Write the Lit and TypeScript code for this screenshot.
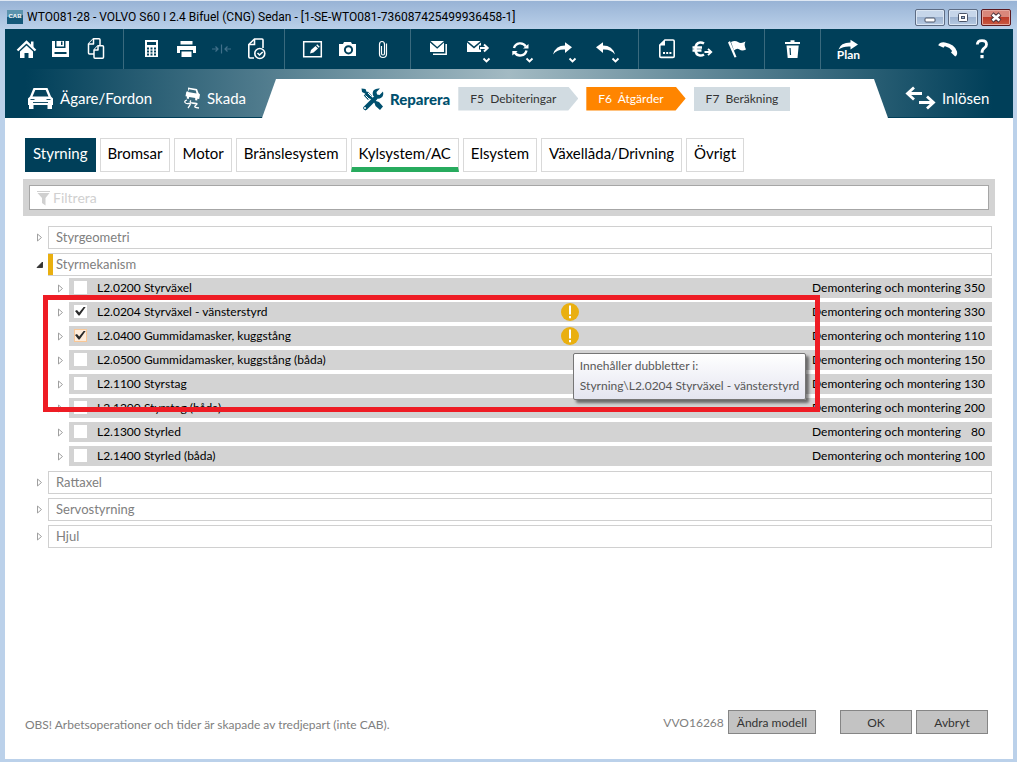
import { LitElement, html, svg, css, nothing } from "lit";
import { customElement, state } from "lit/decorators.js";
import { classMap } from "lit/directives/class-map.js";

const chevron = svg`<path d="M27.500 29.500l3 3 3-3" fill="none" stroke="currentColor" stroke-width="1.800"/>`;

const icons = {
  home: svg`<path d="M8.500 21.500l9-8.500 9 8.500" fill="none" stroke="currentColor" stroke-width="2.400"/><path d="M22 12.500h2.500v6H22z"/><path d="M11 22.500l6.500-6 6.500 6V29h-4.500v-5h-4v5H11z"/>`,
  save: svg`<path d="M8 12h3v7h10.500v-7H25v16H8z"/><path d="M12.500 12h7.500v5.500h-7.500z"/><path d="M17 12.500h1.500v3.500H17zM10.500 23h12v2h-12z" fill="#003f59"/>`,
  copy: svg`<g fill="#003f59" stroke="currentColor" stroke-width="1.500" stroke-linejoin="round"><path d="M14.500 9.800H20q1 0 1 1V24q0 1-1 1H10.500q-1 0-1-1v-9z"/><path d="M14.500 9.800V15h-5"/><path d="M19 16.800h4.500q1 0 1 1v10.500q0 1-1 1h-7.500q-1 0-1-1V21z"/><path d="M19 16.800V21h-4"/></g>`,
  calc: svg`<path d="M11 11h13v17H11z"/><path d="M13 13h9v3h-9z" fill="#003f59"/><path d="M13 19.500h9M13 22.500h9M13 25.500h9" stroke="#003f59" stroke-width="2" stroke-dasharray="2 1.500"/>`,
  print: svg`<path d="M11.500 12h12v3.500h-12zM8 17h19v7h-3v-3H11v3H8zM12.500 22.500h10V28h-10z"/>`,
  merge: svg`<g fill="none" stroke="currentColor" stroke-width="1.200"><path d="M8 20h6M11.500 17.500L14 20l-2.500 2.500M27 20h-6M23.500 17.500L21 20l2.500 2.500M17.500 15.500v9"/></g>`,
  history: svg`<g fill="none" stroke="currentColor" stroke-width="1.600"><path d="M15 29H11q-1.200 0-1.200-1.200V15.500L15.500 10H23q1 0 1 1v8"/><path d="M15.500 10v5.500H10"/><circle cx="20.800" cy="24.500" r="5"/><path d="M18.500 24l2 2 3.200-3"/></g>`,
  edit: svg`<path d="M8.700 12.700h17.600v15H8.700z" fill="none" stroke="currentColor" stroke-width="1.500"/><path d="M15 24.500l1-3.500 4.500-4 2.500 2.500-4.500 4zM21.200 16.300l1-1 2.500 2.500-1 1z"/>`,
  camera: svg`<path d="M9 15h4l1-2h7l1 2h4v12H9z"/><circle cx="18.500" cy="20.800" r="3.600" fill="none" stroke="#003f59" stroke-width="2"/>`,
  clip: svg`<path d="M16.500 17v7.500q0 1.500 1.500 1.500t1.500-1.500v-9q0-3-2.500-3t-2.500 3V25q0 3.500 3.500 3.500t3.500-3.500V14.500" fill="none" stroke="currentColor" stroke-width="1.200"/>`,
  mails: svg`<path d="M9.500 12h13.500l-6.800 6z"/><path d="M9 13.500l7.200 6.300 6.800-6.300V23H9z"/><path d="M25.200 15v10.200H12" fill="none" stroke="currentColor" stroke-width="1.500"/>`,
  send: svg`<path d="M11.500 12h13l-6.500 5.500z"/><path d="M11 13.500l7 6 7-6v3h-2v4h2V23H11z"/><path d="M24 19h7.500M28 15.500l3.700 3.500-3.700 3.500" fill="none" stroke="currentColor" stroke-width="2"/>${chevron}`,
  refresh: svg`<g fill="none" stroke="currentColor" stroke-width="2.400"><path d="M15 19a6.500 6.500 0 0 1 11.800-1.500M27.500 21.500a6.500 6.500 0 0 1-11.800 2"/></g><path d="M24 19.500h5.500V15zM18.700 22H13.300v4.500z"/>${chevron}`,
  forward: svg`<path d="M11 25.500q2.500-9 12-9v-3.200l7 5-7 5.700v-3.500q-7.500-.5-12 5z"/>${chevron}`,
  back: svg`<path d="M30 25.500q-2.500-9-12-9v-3.200l-7 5 7 5.700v-3.500q7.500-.5 12 5z"/>${chevron}`,
  form: svg`<path d="M16 11h8q1.200 0 1.200 1.200v15q0 1.200-1.200 1.200H12q-1.200 0-1.200-1.200v-11z" fill="none" stroke="currentColor" stroke-width="1.600"/><path d="M10.500 16.500l5.500-6v6zM14 23h2v2h-2zM17.200 23h2v2h-2zM20.400 23h2v2h-2z"/>`,
  euro: svg`<path d="M20 14.500q-2-1.200-4-1-4.500.5-4.500 6.500t4.500 6.500q2 .2 4-1M8.500 18.500h9.500M8.500 21.500h9" fill="none" stroke="currentColor" stroke-width="2.600"/><path d="M20.500 23H27M24 19.800l3.300 3.200-3.300 3.200" fill="none" stroke="currentColor" stroke-width="1.800"/>`,
  flag: svg`<path d="M9 13.500l2-1.500 6.500 16-2 .5zM12 13q4-2 7 0t7.500-.5q-2 3 .5 8-4 2-6.500 0t-5.500 1z"/>`,
  trash: svg`<path d="M10 13h5.500v-1.800h4V13H25v2H10zM11.500 16.500h12.200L22.500 29h-9.800z"/><path d="M15 19l.5 7" stroke="#003f59" stroke-width="1.200"/>`,
  plan: svg`<path d="M7.500 20.500q2-7 12-7v-2.800l7.500 4.800-7.500 5v-3q-7-.5-12 3z"/><text class="plan" x="17.500" y="30" text-anchor="middle">Plan</text>`,
  phone: svg`<path d="M8.200 16.200q1.500-3.500 6.800-2.800 9.500 1.500 12 9 .8 3.500-1.800 5l-4.200-4q1.300-1 .8-2-2-2.800-6-4-1.600-.3-2.200 1.400z"/>`,
  help: svg`<path d="M12.300 15.500q.2-3.800 4.700-3.800t4.500 3.800q0 2.200-2.300 3.700t-2.200 4.600" fill="none" stroke="currentColor" stroke-width="2.800"/><path d="M15.400 26h3.200v3.200h-3.200z"/>`,
};
type IconName = keyof typeof icons;

const toolbar: [IconName, string][][] = [
  [["home", "Hem"], ["save", "Spara"], ["copy", "Kopiera"]],
  [["calc", "Kalkylator"], ["print", "Skriv ut"], ["merge", "Slå ihop"], ["history", "Historik"]],
  [["edit", "Redigera"], ["camera", "Bilder"], ["clip", "Bilagor"]],
  [["mails", "Meddelanden"], ["send", "Skicka"], ["refresh", "Uppdatera"], ["forward", "Vidare"], ["back", "Tillbaka"]],
  [["form", "Formulär"], ["euro", "Valuta"], ["flag", "Flagga"]],
  [["trash", "Ta bort"]],
  [["plan", "Planera"]],
];
const wide = new Set<IconName>(["send", "refresh", "forward", "back"]);

interface Operation {
  code: string;
  name: string;
  time: number;
  checked?: boolean;
  hot?: boolean;
  warn?: boolean;
  tip?: string;
}
const operations: Operation[] = [
  { code: "L2.0200", name: "Styrväxel", time: 350 },
  { code: "L2.0204", name: "Styrväxel - vänsterstyrd", time: 330, checked: true, warn: true },
  { code: "L2.0400", name: "Gummidamasker, kuggstång", time: 110, checked: true, hot: true, warn: true, tip: "Styrning\\L2.0204 Styrväxel - vänsterstyrd" },
  { code: "L2.0500", name: "Gummidamasker, kuggstång (båda)", time: 150 },
  { code: "L2.1100", name: "Styrstag", time: 130 },
  { code: "L2.1200", name: "Styrstag (båda)", time: 200 },
  { code: "L2.1300", name: "Styrled", time: 80 },
  { code: "L2.1400", name: "Styrled (båda)", time: 100 },
];
const tabs = ["Styrning", "Bromsar", "Motor", "Bränslesystem", "Kylsystem/AC", "Elsystem", "Växellåda/Drivning", "Övrigt"];
const sections = ["Styrgeometri", "Styrmekanism", "Rattaxel", "Servostyrning", "Hjul"];

@customElement("app-root")
export class AppRoot extends LitElement {
  @state() private tab = "Styrning";
  @state() private open = "Styrmekanism";

  static styles = css`
    :host { display: block; font-family: Lato, "Open Sans", sans-serif; font-size: 12px; color: #000; }
    * { box-sizing: border-box; }
    button, input { font: inherit; color: inherit; margin: 0; }
    button { border: 0; background: none; padding: 0; cursor: pointer; }
    svg { display: block; fill: currentColor; }
    .window { min-height: 100vh; display: flex; flex-direction: column; padding: 0 4px 3px 5px;
      background: linear-gradient(#98b3d5, #bbd1ea 29px); border-top: 1px solid #dfe8f3; }

    .titlebar { height: 28px; display: flex; align-items: center; gap: 4px; padding: 4px 2px 0; }
    .title { flex: 1; margin: 0; font: 400 12px Roboto, "Noto Sans", sans-serif; }
    .logo { width: 16px; height: 14px; }
    .logo text { font: 700 6px "Liberation Sans", sans-serif; fill: #fff; }
    .winbtns { display: flex; gap: 3px; color: #4a5468; }
    .winbtn { width: 30px; height: 17px; border: 1px solid #5d6c84; border-radius: 2px; box-shadow: inset 0 0 0 1px #dce7f4;
      background: linear-gradient(#c6d6ea 50%, #9fb5d2 50%, #b6cae2); display: grid; place-items: center; }
    .winbtn.close { border-color: #5c1a20; box-shadow: inset 0 0 0 1px #e5a79d; background: linear-gradient(#d9877b 50%, #bd3b29 50%, #c95a42); }

    .toolbar { height: 40px; display: flex; background: #003f59; color: #fff; }
    .group { display: flex; padding: 0 10px; border-right: 1px solid #3a6a7e; }
    .group:first-child { padding: 0 9px 0 4px; }
    .group:nth-last-child(2) { border: 0; }
    .group.end { margin-left: auto; padding: 0 13px; border: 0; }
    .tool { width: 35px; }
    .tool.wide { width: 43px; }
    .tool.dim { color: #41708a; }
    .plan { font: 700 12px Lato, sans-serif; }

    .nav { height: 49px; display: flex; color: #fff; box-shadow: inset 0 -1px #003f59;
      background: linear-gradient(90deg, #003f59 2%, #a3bac3 50%, #003f59 98%); font-size: 15px; }
    .nav a { color: inherit; text-decoration: none; display: flex; align-items: center; padding-top: 8px; }
    .before { width: 257px; display: flex; padding-left: 22px; gap: 31px; }
    .before a { gap: 6px; }
    .after { width: 125px; display: flex; padding-left: 17px; }
    .after a { gap: 6px; }
    .active { flex: 1; margin-top: 10px; display: flex; align-items: center; gap: 8px; padding-left: 98px; background: #fff;
      clip-path: polygon(14px 0, calc(100% - 14px) 0, 100% 100%, 0 100%); }
    .nav .repair { color: #00506e; font-weight: 900; gap: 6px; padding: 0; }
    .step { height: 24px; padding: 0 22px 0 12px; background: #d1dbe1; color: #333; font-size: 12px; white-space: pre;
      clip-path: polygon(0 0, calc(100% - 10px) 0, 100% 50%, calc(100% - 10px) 100%, 0 100%); }
    .step.current { background: #ff8500; color: #fff; }
    .step.last { clip-path: none; padding-right: 12px; }

    .page { flex: 1; display: flex; flex-direction: column; background: #fff; padding: 20px 18px 25px; }
    .tabs { display: flex; gap: 4px; padding: 0 2px; font-size: 15px; }
    .tab { height: 34px; padding: 0 7px 5px; border: 1px solid #d9d9d9; background: #fff; }
    .tab.selected { background: #003f59; border-color: #003f59; color: #fff; }
    .tab.marked { border-bottom: 5px solid #27ab5e; padding-bottom: 1px; }
    .filter { display: flex; margin-top: 7px; padding: 6px; background: #d3d3d3; }
    .field { flex: 1; height: 25px; display: flex; align-items: center; gap: 2px; padding-left: 6px; border: 1px solid #a6a6a6; background: #fff; color: #d0d0d0; }
    .field input { flex: 1; border: 0; outline: 0; padding: 0; background: none; color: #333; font-size: 14px; }
    .field input::placeholder { color: #d0d0d0; opacity: 1; }

    .tree { position: relative; display: flex; flex-direction: column; gap: 4px; padding: 10px 3px 0 10px; }
    .branch { display: flex; align-items: center; }
    .twist { width: 15px; height: 16px; display: grid; place-items: center; color: #a0a0a0; fill: none; }
    .branch .twist { padding-right: 3px; }
    .section { flex: 1; height: 23px; padding: 0 7px 2px; border: 1px solid #d0d0d0; background: #fff; color: #808080; font-size: 13px; text-align: left; }
    .section.touched { border-left: 0; padding-left: 8px; box-shadow: inset 5px 0 #e9af10; }
    .rows { list-style: none; margin: 0; padding: 0; display: flex; flex-direction: column; gap: 4px; }
    .list { position: relative; margin: -2px 0 1px 19px; }
    .row { display: flex; align-items: center; height: 20px; }
    .row .twist { width: 17px; }
    .bar { flex: 1; height: 20px; display: grid; grid-template-columns: 25fr 18px 21fr; align-items: center; background: #d3d3d3; }
    .pick { display: flex; align-items: center; gap: 10px; padding: 0 0 2px 5px; }
    .pick input { appearance: none; width: 13px; height: 13px; background: #fff; display: grid; place-items: center; }
    .pick input.hot { background: #fdecdb; outline: 1px solid #f9c796; outline-offset: -1px; }
    .pick input:checked::after { content: ""; width: 11px; height: 9px; background: #2b2b2b;
      clip-path: polygon(0 50%, 18% 38%, 38% 68%, 82% 0, 100% 0, 42% 100%, 32% 100%); }
    .warn { position: relative; width: 18px; height: 18px; }
    .tip { position: absolute; z-index: 1; left: 12px; top: 26px; padding: 2px 6px; border: 1px solid #767676; border-radius: 2px; color: #575757;
      background: linear-gradient(#fff, #e4e5f0); box-shadow: 3px 3px 3px rgba(0, 0, 0, .5); line-height: 20px; height: 47px; white-space: nowrap; font-size: 12px; }
    .work { display: flex; justify-content: flex-end; padding: 0 7px 2px 0; }
    .time { width: 24px; text-align: right; }
    .callout { position: absolute; z-index: 2; pointer-events: none; left: -9px; right: 172px; top: 17px; height: 117px; border: 5px solid #ee1c24; }

    .footer { margin-top: auto; display: flex; align-items: center; gap: 4px; padding: 0 7px 0 2px; color: #808080; }
    .note { flex: 1; margin: 0; padding-top: 4px; }
    .cmd { min-width: 72px; height: 24px; padding: 0 8px; border: 1px solid #858585; background: #c3c3c3; color: #333; }
    .cmd.ok { margin-left: 20px; }
  `;

  private tool([name, label]: [IconName, string]) {
    const big = wide.has(name);
    return html`<button class=${classMap({ tool: true, wide: big, dim: name === "merge" })} aria-label=${label}>
      <svg width=${big ? 43 : 35} height="40" viewBox="0 0 ${big ? 43 : 35} 40">${icons[name]}</svg>
    </button>`;
  }

  private twist(open: boolean, label: string) {
    return html`<button class="twist" aria-label=${label} aria-expanded=${open}
      @click=${() => { this.open = open ? "" : label; }}>
      <svg width="9" height="9" viewBox="0 0 9 9">${open
        ? svg`<path d="M7.500 2v5.500H2z" fill="#333" stroke="#222" stroke-width=".8"/>`
        : svg`<path d="M2.500 1v7l4-3.500z" fill="none" stroke="#a0a0a0"/>`}</svg>
    </button>`;
  }

  private row(op: Operation) {
    return html`<li class="row">
      ${this.twist(false, op.code)}
      <div class="bar">
        <label class="pick"><input type="checkbox" class=${op.hot ? "hot" : ""} .checked=${!!op.checked}><span>${op.code} ${op.name}</span></label>
        <span class="warn">${op.warn ? html`<svg width="18" height="18" viewBox="0 0 18 18"><circle cx="9" cy="9" r="9" fill="#e9af10"/><path d="M8 2.500h2v9H8zM8 13h2v2.200H8z" fill="#fff"/></svg>` : nothing}
          ${op.tip ? html`<span class="tip" role="tooltip">Innehåller dubbletter i:<br>${op.tip}</span>` : nothing}</span>
        <span class="work"><span>Demontering och montering</span><span class="time">${op.time}</span></span>
      </div>
    </li>`;
  }

  render() {
    return html`<div class="window">
      <header class="titlebar">
        <svg class="logo" viewBox="0 0 16 14"><rect width="16" height="14" fill="#15597a"/><path d="M0 0h16v5L0 7z" fill="#5b93ad"/><text x="8" y="8" text-anchor="middle">CAB</text></svg>
        <h1 class="title">WTO081-28 - VOLVO S60 I 2.4 Bifuel (CNG) Sedan - [1-SE-WTO081-736087425499936458-1]</h1>
        <div class="winbtns">
          <button class="winbtn" aria-label="Minimera"><svg width="12" height="11"><rect x="1" y="6" width="10" height="4" rx="1" fill="#fff" stroke="#4a5468"/></svg></button>
          <button class="winbtn" aria-label="Maximera"><svg width="12" height="11"><rect x="1.500" y="1.500" width="9" height="8" rx="1" fill="#fff" stroke="#4a5468"/><rect x="4.500" y="4.500" width="3" height="2" fill="#9fb5d2" stroke="#4a5468"/></svg></button>
          <button class="winbtn close" aria-label="Stäng"><svg width="14" height="11"><path d="M3 2l8 7M11 2L3 9" stroke="#4a3038" stroke-width="4.500"/><path d="M3.500 2.500l7 6M10.500 2.500l-7 6" stroke="#fff" stroke-width="2.500"/></svg></button>
        </div>
      </header>
      <div class="toolbar" role="toolbar">
        ${toolbar.map((g) => html`<div class="group">${g.map((t) => this.tool(t))}</div>`)}
        <div class="group end">${this.tool(["phone", "Ring"])}${this.tool(["help", "Hjälp"])}</div>
      </div>
      <nav class="nav">
        <div class="before">
          <a href="#owner"><svg width="27" height="24" viewBox="0 0 27 24"><path d="M6.500 2h14l3.500 8.500 2 2V19H1v-6.500l2-2zM8.300 4L5.500 10.500h16L18.700 4z" fill-rule="evenodd"/><path d="M2 18.500h4.500V23H2zM20.500 18.500H25V23h-4.500z"/><path d="M3.500 13.500h4M19.500 13.500h4M6 16.500h15" stroke="#1d546b" stroke-width="1.200"/></svg><span>Ägare/Fordon</span></a>
          <a href="#damage"><svg width="18" height="24" viewBox="0 0 18 24"><path d="M5 1.500l9 1.500 1.500 4 1.500 1.500-.8 4.500-1.800-.2-.2 1.800-2-.3V12l-6-1-.5 2-2-.5.3-2-1.500-.3.8-4.500 1.800-.5zM6 3.200L5 6l8.500 1.400-.7-3z" fill-rule="evenodd"/><path d="M4 14q-3 1-2 2.500t4 1-1 4.500M8 14.500q-2 2 1 2.500t4.500.5-1 2 3.500 2.500" fill="none" stroke="currentColor" stroke-width="1.300"/></svg><span>Skada</span></a>
        </div>
        <div class="active">
          <a class="repair" href="#repair"><svg width="24" height="24" viewBox="0 0 24 24"><path d="M5.500 21L15 11.500" stroke="currentColor" stroke-width="4.500" stroke-linecap="round"/><path d="M20 1.500l-3.500 3.500.5 2.500 2.500.5L23 4.500q1 4-1.500 6t-5.500 1l-3-3q-1-3.500 1-5.500t6-1.500z"/><path d="M1.500 1.500l4 .5 1 2.500L16 14l3 1 4 4.500-3 3.500-4.500-4-1-3L5 6.500 2 5z"/><path d="M3.800 8.500l4-4L12 9l-4 4z"/><path d="M5.500 8.500L9 12M8 6l3.500 3.500" stroke="#fff"/><circle cx="5" cy="21" r="1" fill="#fff"/></svg><span>Reparera</span></a>
          <button class="step">F5  Debiteringar</button>
          <button class="step current">F6  Åtgärder</button>
          <button class="step last">F7  Beräkning</button>
        </div>
        <div class="after">
          <a href="#redeem"><svg width="31" height="24" viewBox="0 0 31 24" fill="none"><path d="M17 7.500H3M9 1.500l-6.500 6L9 13.500M14 16.500h14M22 10.500l6.500 6-6.500 6" fill="none" stroke="currentColor" stroke-width="2.800"/></svg><span>Inlösen</span></a>
        </div>
      </nav>
      <main class="page">
        <div class="tabs" role="tablist">
          ${tabs.map((t) => html`<button role="tab" aria-selected=${t === this.tab} @click=${() => { this.tab = t; }}
            class=${classMap({ tab: true, selected: t === this.tab, marked: t === "Kylsystem/AC" })}>${t}</button>`)}
        </div>
        <div class="filter"><label class="field">
          <svg width="15" height="16" viewBox="0 0 15 16"><path d="M1 1h13v1H1zM1.500 3h12L9.500 8v7.500L6 13V8z"/></svg>
          <input type="text" placeholder="Filtrera" aria-label="Filtrera"></label></div>
        <div class="tree">
          ${sections.map((s) => html`<div class="branch">${this.twist(s === this.open, s)}
              <button class=${classMap({ section: true, touched: s === "Styrmekanism" })} @click=${() => { this.open = s === this.open ? "" : s; }}>${s}</button></div>
            ${s === this.open ? html`<div class="list"><ul class="rows">${operations.map((o) => this.row(o))}</ul><div class="callout"></div></div>` : nothing}`)}
        </div>
        <footer class="footer">
          <p class="note">OBS! Arbetsoperationer och tider är skapade av tredjepart (inte CAB).</p>
          <span>VVO16268</span>
          <button class="cmd">Ändra modell</button>
          <button class="cmd ok">OK</button>
          <button class="cmd">Avbryt</button>
        </footer>
      </main>
    </div>`;
  }
}
